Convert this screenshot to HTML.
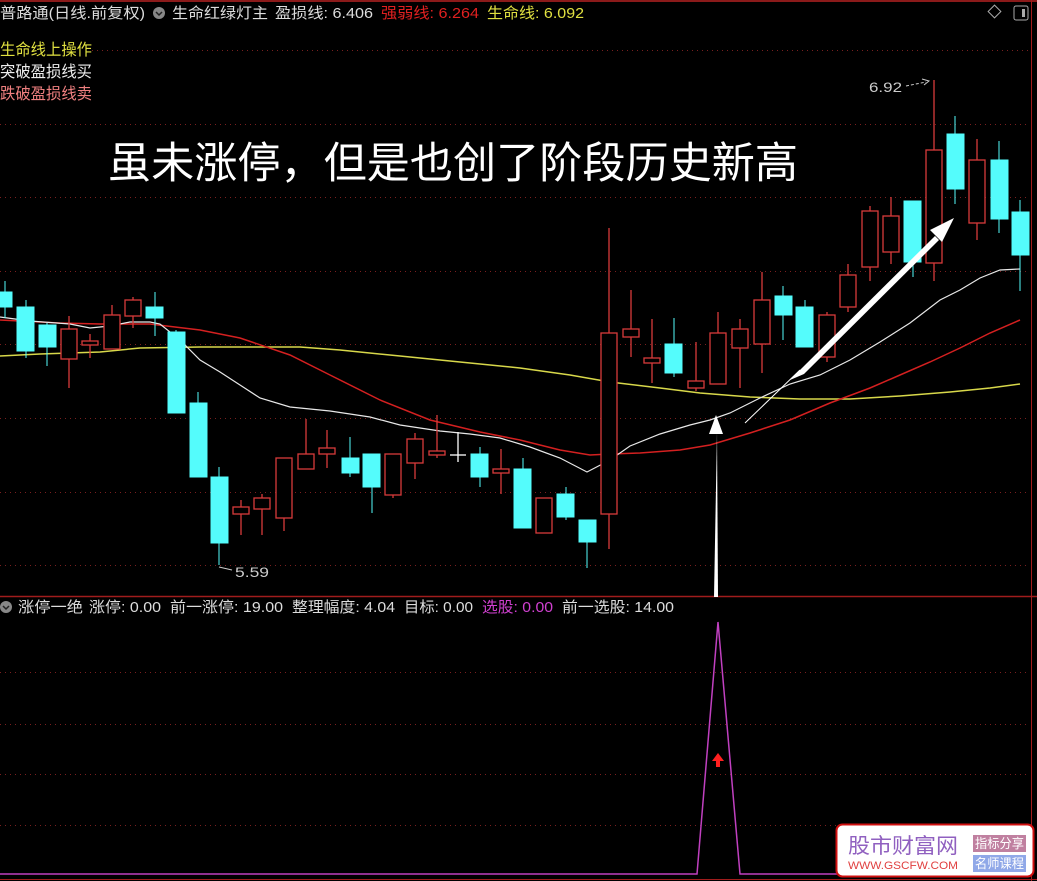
<!DOCTYPE html>
<html><head><meta charset="utf-8"><style>
html,body{margin:0;padding:0;background:#000;width:1037px;height:881px;overflow:hidden}
svg{display:block}
text{font-family:"Liberation Sans","Noto Sans CJK SC",sans-serif}
</style></head><body>
<svg width="1037" height="881" viewBox="0 0 1037 881" xmlns="http://www.w3.org/2000/svg">
<rect width="1037" height="881" fill="#000"/>
<line x1="0" y1="1" x2="1037" y2="1" stroke="#8b1a1a" stroke-width="2"/>
<g stroke="#7a1f1f" stroke-dasharray="1,4" stroke-width="1">
<line x1="92" y1="50.5" x2="1030" y2="50.5"/><line x1="0" y1="124.5" x2="1030" y2="124.5"/>
<line x1="0" y1="197.5" x2="1030" y2="197.5"/><line x1="0" y1="271.5" x2="1030" y2="271.5"/>
<line x1="0" y1="344.5" x2="1030" y2="344.5"/><line x1="0" y1="418.5" x2="1030" y2="418.5"/>
<line x1="0" y1="492.5" x2="1030" y2="492.5"/><line x1="0" y1="565.5" x2="1030" y2="565.5"/>
<line x1="0" y1="672.5" x2="1030" y2="672.5"/><line x1="0" y1="724.5" x2="1030" y2="724.5"/>
<line x1="0" y1="774.5" x2="1030" y2="774.5"/><line x1="0" y1="825.5" x2="1030" y2="825.5"/>
</g>
<line x1="1031.5" y1="0" x2="1031.5" y2="881" stroke="#a01c1c"/>
<line x1="0" y1="596.5" x2="1037" y2="596.5" stroke="#a01c1c" stroke-width="1.5"/>
<line x1="0" y1="879.5" x2="1037" y2="879.5" stroke="#a01c1c"/>

<polyline fill="none" stroke="#d8d84a" stroke-width="1.5" points="0,356 40,354 100,352 140,348 200,347 260,347 300,347 340,350 400,356 460,362 520,368 570,375 610,382 660,388 700,393 750,397 800,399 850,399 900,396 950,392 990,388 1020,384"/>
<polyline fill="none" stroke="#d42020" stroke-width="1.5" points="0,320 60,323 100,324 150,324 200,330 240,338 290,355 330,375 380,400 430,420 480,432 520,440 560,450 590,455 610,454 640,453 680,450 710,445 750,433 790,420 830,403 870,388 900,375 930,362 960,348 990,333 1020,320"/>
<polyline fill="none" stroke="#e8e8e8" stroke-width="1.2" points="0,317 30,321 70,324 90,328 110,326 130,322 150,322 160,324 180,340 200,360 220,372 240,385 260,398 290,407 330,411 370,417 400,425 440,431 470,434 500,438 530,447 560,458 587,472 610,460 630,446 660,434 690,425 710,420 730,413 760,398 790,384 820,375 850,360 880,342 910,323 940,300 960,290 980,278 1000,270 1020,269"/>

<g fill="#54fcfc" stroke="#54fcfc" stroke-width="1">
<line x1="5" y1="281" x2="5" y2="318"/><rect x="-3" y="292" width="15" height="15"/>
<line x1="26" y1="300" x2="26" y2="358"/><rect x="17" y="307" width="17" height="44"/>
<line x1="47" y1="323" x2="47" y2="366"/><rect x="39" y="325" width="17" height="22"/>
<line x1="155" y1="292" x2="155" y2="336"/><rect x="146" y="307" width="17" height="11"/>
<line x1="176" y1="330" x2="176" y2="413"/><rect x="168" y="332" width="17" height="81"/>
<line x1="198" y1="392" x2="198" y2="477"/><rect x="190" y="403" width="17" height="74"/>
<line x1="219" y1="467" x2="219" y2="565"/><rect x="211" y="477" width="17" height="66"/>
<line x1="350" y1="437" x2="350" y2="477"/><rect x="342" y="458" width="17" height="15"/>
<line x1="372" y1="454" x2="372" y2="513"/><rect x="363" y="454" width="17" height="33"/>
<line x1="480" y1="447" x2="480" y2="487"/><rect x="471" y="454" width="17" height="23"/>
<line x1="523" y1="458" x2="523" y2="528"/><rect x="514" y="469" width="17" height="59"/>
<line x1="566" y1="487" x2="566" y2="520"/><rect x="557" y="494" width="17" height="23"/>
<line x1="587" y1="520" x2="587" y2="568"/><rect x="579" y="520" width="17" height="22"/>
<line x1="674" y1="318" x2="674" y2="377"/><rect x="665" y="344" width="17" height="29"/>
<line x1="783" y1="286" x2="783" y2="340"/><rect x="775" y="296" width="17" height="19"/>
<line x1="805" y1="300" x2="805" y2="347"/><rect x="796" y="307" width="17" height="40"/>
<line x1="913" y1="201" x2="913" y2="277"/><rect x="904" y="201" width="17" height="61"/>
<line x1="955" y1="116" x2="955" y2="204"/><rect x="947" y="134" width="17" height="55"/>
<line x1="999" y1="141" x2="999" y2="233"/><rect x="991" y="160" width="17" height="59"/>
<line x1="1020" y1="200" x2="1020" y2="291"/><rect x="1012" y="212" width="17" height="43"/>
</g>
<g fill="#000" stroke="#d83a3a" stroke-width="1.3">
<line x1="69" y1="316" x2="69" y2="388"/><rect x="61" y="329" width="16" height="30"/>
<line x1="90" y1="334" x2="90" y2="358"/><rect x="82" y="341" width="16" height="4"/>
<line x1="112" y1="305" x2="112" y2="349"/><rect x="104" y="315" width="16" height="34"/>
<line x1="133" y1="297" x2="133" y2="328"/><rect x="125" y="300" width="16" height="16"/>
<line x1="241" y1="500" x2="241" y2="535"/><rect x="233" y="507" width="16" height="7"/>
<line x1="262" y1="494" x2="262" y2="535"/><rect x="254" y="498" width="16" height="11"/>
<line x1="284" y1="458" x2="284" y2="531"/><rect x="276" y="458" width="16" height="60"/>
<line x1="306" y1="419" x2="306" y2="469"/><rect x="298" y="454" width="16" height="15"/>
<line x1="327" y1="430" x2="327" y2="468"/><rect x="319" y="448" width="16" height="6"/>
<line x1="393" y1="454" x2="393" y2="498"/><rect x="385" y="454" width="16" height="41"/>
<line x1="415" y1="433" x2="415" y2="479"/><rect x="407" y="439" width="16" height="24"/>
<line x1="437" y1="415" x2="437" y2="458"/><rect x="429" y="451" width="16" height="4"/>
<line x1="501" y1="449" x2="501" y2="494"/><rect x="493" y="469" width="16" height="4"/>
<line x1="544" y1="498" x2="544" y2="533"/><rect x="536" y="498" width="16" height="35"/>
<line x1="609" y1="228" x2="609" y2="549"/><rect x="601" y="333" width="16" height="181"/>
<line x1="631" y1="290" x2="631" y2="357"/><rect x="623" y="329" width="16" height="8"/>
<line x1="652" y1="319" x2="652" y2="383"/><rect x="644" y="358" width="16" height="5"/>
<line x1="696" y1="342" x2="696" y2="391"/><rect x="688" y="381" width="16" height="7"/>
<line x1="718" y1="312" x2="718" y2="384"/><rect x="710" y="333" width="16" height="51"/>
<line x1="740" y1="319" x2="740" y2="388"/><rect x="732" y="329" width="16" height="19"/>
<line x1="762" y1="272" x2="762" y2="373"/><rect x="754" y="300" width="16" height="44"/>
<line x1="827" y1="312" x2="827" y2="362"/><rect x="819" y="315" width="16" height="42"/>
<line x1="848" y1="264" x2="848" y2="312"/><rect x="840" y="275" width="16" height="32"/>
<line x1="870" y1="206" x2="870" y2="281"/><rect x="862" y="211" width="16" height="56"/>
<line x1="891" y1="197" x2="891" y2="264"/><rect x="883" y="216" width="16" height="36"/>
<line x1="934" y1="80" x2="934" y2="281"/><rect x="926" y="150" width="16" height="113"/>
<line x1="977" y1="139" x2="977" y2="240"/><rect x="969" y="160" width="16" height="63"/>
</g>
<g stroke="#fff" stroke-width="1.3"><line x1="458" y1="432" x2="458" y2="462"/><line x1="450" y1="455" x2="466" y2="455"/></g>

<line x1="745" y1="423" x2="800" y2="370" stroke="#fff" stroke-width="1"/>
<polygon points="790,380 800,370 935,236 939,240 804,374" fill="#fff"/>
<polygon points="954,218 930,230 942,242" fill="#fff"/>
<polygon points="714,597 718,597 717,432" fill="#fff"/>
<polygon points="716,415 709,434 723,434" fill="#fff"/>

<line x1="219" y1="567" x2="232" y2="570" stroke="#ccc"/>
<text x="235" y="577" fill="#ccc" font-size="14" textLength="34" lengthAdjust="spacingAndGlyphs">5.59</text>
<text x="869" y="92" fill="#ccc" font-size="14" textLength="33" lengthAdjust="spacingAndGlyphs">6.92</text>
<line x1="906" y1="86" x2="926" y2="82" stroke="#ccc" stroke-dasharray="3,2"/>
<path d="M922 79 l7 2 l-5 4" stroke="#ccc" fill="none"/>

<text x="0" y="18" font-size="15" fill="#ddd" textLength="145" lengthAdjust="spacingAndGlyphs">普路通(日线.前复权)</text>
<circle cx="159" cy="13" r="6" fill="#888"/><path d="M156 12 l3 3 l3 -3" stroke="#222" stroke-width="1.5" fill="none"/>
<text x="172" y="18" font-size="15" fill="#ddd" textLength="96" lengthAdjust="spacingAndGlyphs">生命红绿灯主</text>
<text x="275" y="18" font-size="15" fill="#ddd" textLength="98" lengthAdjust="spacingAndGlyphs">盈损线: 6.406</text>
<text x="381" y="18" font-size="15" fill="#e02020" textLength="98" lengthAdjust="spacingAndGlyphs">强弱线: 6.264</text>
<text x="487" y="18" font-size="15" fill="#e0e040" textLength="97" lengthAdjust="spacingAndGlyphs">生命线: 6.092</text>
<rect x="990" y="7" width="9" height="9" fill="none" stroke="#aaa" transform="rotate(45 994.5 11.5)"/>
<rect x="1014" y="6" width="14" height="14" rx="2" fill="none" stroke="#aaa"/><rect x="1022" y="9" width="3" height="8" fill="#aaa"/>
<text x="0" y="55" font-size="16" fill="#e0e040" textLength="92" lengthAdjust="spacingAndGlyphs">生命线上操作</text>
<text x="0" y="77" font-size="16" fill="#eee" textLength="92" lengthAdjust="spacingAndGlyphs">突破盈损线买</text>
<text x="0" y="99" font-size="16" fill="#f08080" textLength="92" lengthAdjust="spacingAndGlyphs">跌破盈损线卖</text>

<text x="108" y="178" font-size="43" fill="#fff" textLength="690" lengthAdjust="spacingAndGlyphs">虽未涨停，但是也创了阶段历史新高</text>

<circle cx="6" cy="607" r="6" fill="#888"/><path d="M3 606 l3 3 l3 -3" stroke="#222" stroke-width="1.5" fill="none"/>
<g font-size="15" fill="#ddd">
<text x="18" y="612" textLength="65" lengthAdjust="spacingAndGlyphs">涨停一绝</text>
<text x="89" y="612" textLength="72" lengthAdjust="spacingAndGlyphs">涨停: 0.00</text>
<text x="170" y="612" textLength="113" lengthAdjust="spacingAndGlyphs">前一涨停: 19.00</text>
<text x="292" y="612" textLength="103" lengthAdjust="spacingAndGlyphs">整理幅度: 4.04</text>
<text x="404" y="612" textLength="69" lengthAdjust="spacingAndGlyphs">目标: 0.00</text>
<text x="482" y="612" fill="#d040d0" textLength="71" lengthAdjust="spacingAndGlyphs">选股: 0.00</text>
<text x="562" y="612" textLength="112" lengthAdjust="spacingAndGlyphs">前一选股: 14.00</text>
</g>
<polyline fill="none" stroke="#c040c0" stroke-width="1.5" points="0,874 697,874 718,622 740,874 1030,874"/>
<polygon points="718,753 712,761 716,761 716,767 720,767 720,761 724,761" fill="#ff2020"/>

<rect x="836.5" y="824.5" width="197" height="52" rx="6" fill="#fff" stroke="#d01010" stroke-width="2"/>
<text x="848" y="853" font-size="21" fill="#9060c0" textLength="110" lengthAdjust="spacingAndGlyphs">股市财富网</text>
<text x="848" y="869" font-size="11" fill="#e04040" font-family="Liberation Serif" textLength="110" lengthAdjust="spacingAndGlyphs">WWW.GSCFW.COM</text>
<rect x="973" y="835" width="53" height="17" fill="#c080a0"/>
<text x="975" y="848" font-size="13" fill="#fff" textLength="49" lengthAdjust="spacingAndGlyphs">指标分享</text>
<rect x="973" y="855" width="53" height="17" fill="#90a8e8"/>
<text x="975" y="868" font-size="13" fill="#fff" textLength="49" lengthAdjust="spacingAndGlyphs">名师课程</text>
</svg>
</body></html>
